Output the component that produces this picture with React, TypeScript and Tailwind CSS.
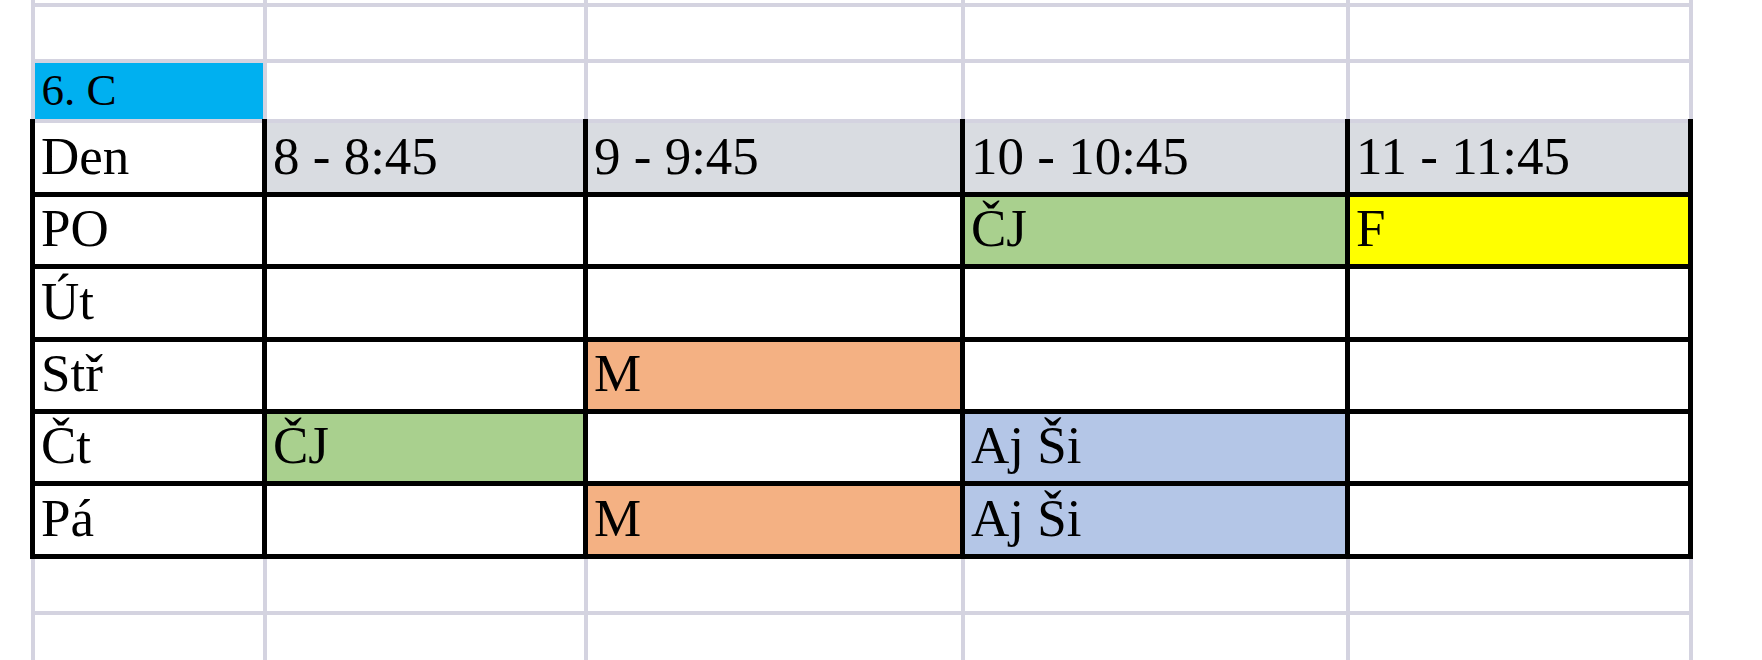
import React from 'react';

type Cell = { text?: string; bg?: string };

const colWidths = ['w-[232px]', 'w-[321px]', 'w-[377px]', 'w-[385px]', 'w-[343px]'];

const gray = 'border-4 border-[#d4d3e0]';
const black = 'border-[5px] border-black';

const times = ['8 - 8:45', '9 - 9:45', '10 - 10:45', '11 - 11:45'];

const green = 'bg-[#a9d08e]';
const orange = 'bg-[#f4b183]';
const lightBlue = 'bg-[#b4c6e7]';

const days: { day: string; h: string; cells: Cell[] }[] = [
  { day: 'PO', h: 'h-[72px]', cells: [{}, {}, { text: 'ČJ', bg: green }, { text: 'F', bg: 'bg-[#ffff00]' }] },
  { day: 'Út', h: 'h-[73px]', cells: [{}, {}, {}, {}] },
  { day: 'Stř', h: 'h-[72px]', cells: [{}, { text: 'M', bg: orange }, {}, {}] },
  { day: 'Čt', h: 'h-[72px]', cells: [{ text: 'ČJ', bg: green }, {}, { text: 'Aj Ši', bg: lightBlue }, {}] },
  { day: 'Pá', h: 'h-[73px]', cells: [{}, { text: 'M', bg: orange }, { text: 'Aj Ši', bg: lightBlue }, {}] },
];

const textCell = 'align-bottom text-left whitespace-nowrap pl-[6px] pb-[9px]';

const EmptyRow = ({ h, top }: { h: string; top?: boolean }) => (
  <tr className={h}>
    {colWidths.map((_, i) => (
      <td key={i} className={`${gray} ${top ? 'border-t-0' : ''}`} />
    ))}
  </tr>
);

export default function App() {
  return (
    <div className="h-[660px] w-full overflow-hidden bg-white">
      <table className="ml-[30px] table-fixed border-collapse font-['Liberation_Serif','Times_New_Roman',serif] text-[53px] leading-none text-black">
        <colgroup>
          {colWidths.map((w, i) => (
            <col key={i} className={w} />
          ))}
        </colgroup>
        <tbody>
          <EmptyRow h="h-[5px]" top />
          <EmptyRow h="h-[56px]" />
          {/* class label */}
          <tr className="h-[60px]">
            <td className={`${gray} bg-[#00b0f0] align-bottom pl-[7px] pb-[6px] text-[45px] whitespace-nowrap`}>6. C</td>
            {colWidths.slice(1).map((_, i) => (
              <td key={i} className={gray} />
            ))}
          </tr>
          {/* header */}
          <tr className="h-[73px]">
            <td className={`border-x-[5px] border-b-[5px] border-t-0 border-black ${textCell}`}>Den</td>
            {times.map((t) => (
              <td key={t} className={`border-x-[5px] border-b-[5px] border-t-0 border-black bg-[#d9dce1] ${textCell}`}>
                {t}
              </td>
            ))}
          </tr>
          {days.map((d) => (
            <tr key={d.day} className={d.h}>
              <td className={`${black} ${textCell}`}>{d.day}</td>
              {d.cells.map((c, i) => (
                <td key={i} className={`${black} ${c.bg ?? ''} ${textCell}`}>
                  {c.text}
                </td>
              ))}
            </tr>
          ))}
          <EmptyRow h="h-[57px]" />
          <EmptyRow h="h-[58px]" />
        </tbody>
      </table>
    </div>
  );
}
